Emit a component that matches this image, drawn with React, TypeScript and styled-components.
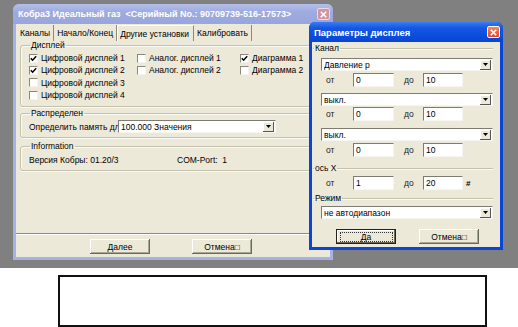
import React from 'react';
import styled, { createGlobalStyle, css } from 'styled-components';

const Global = createGlobalStyle`
  html, body { margin: 0; padding: 0; background: #fff; }
  body { font-family: "Liberation Sans", Arial, sans-serif; font-size: 8.5px; color: #000; }
  * { box-sizing: border-box; }
`;

const Page = styled.div`
  width: 518px;
  height: 327px;
  display: flex;
  flex-direction: column;
  overflow: hidden;
  background: #fff;
`;

const Desktop = styled.div`
  position: relative;
  flex: none;
  height: 268px;
  background: #808080;
`;

const Lower = styled.div`
  flex: 1;
  padding: 7px 0 0 58px;
`;

const NoteBox = styled.div`
  width: 429px;
  height: 52px;
  border: 2px solid #111;
`;

const Window = styled.div<{ $active?: boolean; $x: number; $y: number; $w: number; $h: number }>`
  position: absolute;
  left: ${p => p.$x}px;
  top: ${p => p.$y}px;
  width: ${p => p.$w}px;
  height: ${p => p.$h}px;
  display: flex;
  flex-direction: column;
  padding: 0 3px 3px;
  border-radius: 6px 6px 0 0;
  background: ${p => (p.$active ? '#0b45d8' : '#a6b2e3')};
`;

const TitleBar = styled.div<{ $active?: boolean; $h: number }>`
  flex: none;
  height: ${p => p.$h}px;
  margin: 0 -3px;
  padding: 0 3px 0 5px;
  display: flex;
  align-items: center;
  border-radius: 6px 6px 0 0;
  color: #fff;
  font-weight: bold;
  font-size: ${p => (p.$active ? 9.5 : 9)}px;
  white-space: nowrap;
  background: ${p =>
    p.$active
      ? 'linear-gradient(#3b7cf2 0%, #1656e2 30%, #0a4ddc 70%, #0b45d0 100%)'
      : 'linear-gradient(#b4bfe9 0%, #9eabdf 40%, #98a6dc 100%)'};
`;

const TitleText = styled.span`
  flex: 1;
  overflow: hidden;
`;

const CloseBtn = styled.div<{ $active?: boolean }>`
  flex: none;
  width: 13px;
  height: 12px;
  border-radius: 2px;
  display: flex;
  align-items: center;
  justify-content: center;
  border: 1px solid ${p => (p.$active ? '#fff' : '#e8d8e8')};
  background: ${p => (p.$active ? 'linear-gradient(#f08a64, #e0452a)' : '#d493a2')};
`;

const Body = styled.div`
  flex: 1;
  display: flex;
  flex-direction: column;
  background: #ece9d8;
  min-height: 0;
`;

/* ---- Main window parts ---- */
const TabStrip = styled.div`
  flex: none;
  display: flex;
  height: 16px;
  padding-left: 1px;
  margin-top: 1px;
`;

const Tab = styled.div<{ $active?: boolean }>`
  display: flex;
  align-items: center;
  padding: 0 3px;
  border-right: 1px solid #8c8a80;
  ${p =>
    p.$active &&
    css`
      border-left: 1px solid #fff;
      border-top: 1px solid #fff;
      padding: 0 4px 0 2px;
    `}
`;

const TabPanel = styled.div`
  flex: 1;
  display: flex;
  flex-direction: column;
  padding: 0 5px 0 4px;
`;

const Group = styled.fieldset<{ $top?: number }>`
  margin: ${p => p.$top ?? 0}px 0 0;
  padding: 0 0 0 8px;
  border: 1px solid #c3c0ae;
  border-radius: 3px;
  box-shadow: 1px 1px 0 #fbfbf6, inset 1px 1px 0 #fbfbf6;
`;

const Legend = styled.legend`
  padding: 0 1px;
  margin-left: 1px;
  line-height: 9px;
  color: #000;
`;

const CheckGrid = styled.div`
  display: grid;
  grid-template-columns: 108px 103px auto;
  grid-auto-flow: column;
  grid-template-rows: repeat(4, 12.3px);
  padding: 2px 0 5px;
`;

const CheckItem = styled.label`
  display: flex;
  align-items: center;
  gap: 3px;
  white-space: nowrap;
`;

const CheckBox = styled.span`
  flex: none;
  width: 9px;
  height: 9px;
  background: #fff;
  border-top: 1px solid #8a887c;
  border-left: 1px solid #8a887c;
  border-right: 1px solid #f4f3ee;
  border-bottom: 1px solid #f4f3ee;
  display: flex;
  align-items: center;
  justify-content: center;
`;

const FieldRow = styled.div<{ $pt?: number; $pb?: number }>`
  display: flex;
  align-items: center;
  padding: ${p => p.$pt ?? 2}px 0 ${p => p.$pb ?? 3}px;
  white-space: nowrap;
`;

const ClipLabel = styled.span<{ $w: number }>`
  flex: none;
  width: ${p => p.$w}px;
  overflow: hidden;
`;

const Select = styled.div<{ $w?: number }>`
  flex: none;
  display: flex;
  align-items: center;
  height: 13px;
  width: ${p => (p.$w ? `${p.$w}px` : 'auto')};
  background: #fff;
  border-top: 1px solid #7e7c72;
  border-left: 1px solid #7e7c72;
  border-right: 1px solid #f6f5f0;
  border-bottom: 1px solid #f6f5f0;
  padding: 0 1px 0 2px;
`;

const SelectText = styled.span`
  flex: 1;
  white-space: nowrap;
  overflow: hidden;
`;

const DropBtn = styled.span`
  flex: none;
  width: 11px;
  height: 10px;
  background: #ece9d8;
  box-shadow: inset -1px -1px 0 #555, inset 1px 1px 0 #fff;
  display: flex;
  align-items: center;
  justify-content: center;
`;

const Spacer = styled.div`
  flex: 1;
`;

const Separator = styled.div`
  flex: none;
  height: 2px;
  border-top: 1px solid #8c8a7e;
  border-bottom: 1px solid #fff;
`;

const ButtonRow = styled.div<{ $pl: number; $gap: number; $pt: number; $pb: number }>`
  flex: none;
  display: flex;
  padding: ${p => p.$pt}px 0 ${p => p.$pb}px ${p => p.$pl}px;
  gap: ${p => p.$gap}px;
`;

const Button = styled.div<{ $default?: boolean }>`
  width: 60px;
  height: 15px;
  display: flex;
  align-items: center;
  justify-content: center;
  background: #ece9d8;
  box-shadow: inset -1px -1px 0 #6b695f, inset 1px 1px 0 #fff, inset -2px -2px 0 #a9a796;
  ${p =>
    p.$default &&
    css`
      border: 1px solid #222;
      box-shadow: inset -1px -1px 0 #6b695f, inset 1px 1px 0 #fff;
    `}
`;

const FocusRing = styled.span`
  display: flex;
  align-items: center;
  justify-content: center;
  width: calc(100% - 5px);
  height: calc(100% - 3px);
  border: 1px dotted #333;
`;

/* ---- Dialog parts ---- */
const DialogBody = styled(Body)`
  padding: 0 7px 0 1px;
`;

const Section = styled.fieldset<{ $top: number }>`
  margin: ${p => p.$top}px 0 0;
  padding: 0;
  border: none;
  border-top: 1px solid #c3c0ae;
  box-shadow: inset 0 1px 0 #fbfbf6;
  min-width: 0;
`;

const SectionLegend = styled.legend`
  padding: 0 1px 0 1px;
  margin-left: 1px;
  line-height: 9px;
`;

const Indented = styled.div<{ $top: number }>`
  padding-left: 8px;
  margin-top: ${p => p.$top}px;
`;

const RangeRow = styled.div<{ $top: number }>`
  display: flex;
  align-items: center;
  height: 14px;
  margin-top: ${p => p.$top}px;
  padding-left: 13px;
`;

const RangeLabel = styled.span<{ $w: number; $ml?: number }>`
  flex: none;
  width: ${p => p.$w}px;
  margin-left: ${p => p.$ml ?? 0}px;
  color: #222;
`;

const Input = styled.div<{ $w: number }>`
  flex: none;
  width: ${p => p.$w}px;
  height: 14px;
  display: flex;
  align-items: center;
  padding-left: 2px;
  background: #fff;
  border-top: 1px solid #7e7c72;
  border-left: 1px solid #7e7c72;
  border-right: 1px solid #f6f5f0;
  border-bottom: 1px solid #f6f5f0;
`;

const Suffix = styled.span`
  margin-left: 3px;
  font-weight: bold;
  font-size: 8px;
`;

const CloseIcon = () => (
  <svg width="7" height="7" viewBox="0 0 7 7">
    <path d="M0.8 0.8 L6.2 6.2 M6.2 0.8 L0.8 6.2" stroke="#fff" strokeWidth="1.6" />
  </svg>
);

const CheckMark = () => (
  <svg width="7" height="7" viewBox="0 0 7 7">
    <path d="M0.8 3.2 L2.6 5.2 L6.2 1.2" stroke="#000" strokeWidth="1.5" fill="none" />
  </svg>
);

const Arrow = () => (
  <svg width="5" height="3" viewBox="0 0 5 3">
    <path d="M0 0 H5 L2.5 3 Z" fill="#000" />
  </svg>
);

const Check: React.FC<{ label: string; checked?: boolean }> = ({ label, checked }) => (
  <CheckItem>
    <CheckBox>{checked && <CheckMark />}</CheckBox>
    {label}
  </CheckItem>
);

const Combo: React.FC<{ text: string; w?: number }> = ({ text, w }) => (
  <Select $w={w}>
    <SelectText>{text}</SelectText>
    <DropBtn>
      <Arrow />
    </DropBtn>
  </Select>
);

const Range: React.FC<{ top: number; from: string; to: string; suffix?: string }> = ({ top, from, to, suffix }) => (
  <RangeRow $top={top}>
    <RangeLabel $w={27}>от</RangeLabel>
    <Input $w={41}>{from}</Input>
    <RangeLabel $w={19} $ml={10}>до</RangeLabel>
    <Input $w={40}>{to}</Input>
    {suffix && <Suffix>{suffix}</Suffix>}
  </RangeRow>
);

export default function App() {
  return (
    <Page>
      <Global />
      <Desktop>
        <Window $x={13} $y={4} $w={320} $h={256}>
          <TitleBar $h={20}>
            <TitleText>Кобра3 Идеальный газ&nbsp; &lt;Серийный No.: 90709739-516-17573&gt;</TitleText>
            <CloseBtn>
              <CloseIcon />
            </CloseBtn>
          </TitleBar>
          <Body>
            <TabStrip>
              <Tab>Каналы</Tab>
              <Tab>Начало/Конец</Tab>
              <Tab $active>Другие установки</Tab>
              <Tab>Калибровать</Tab>
            </TabStrip>
            <TabPanel>
              <Group>
                <Legend>Дисплей</Legend>
                <CheckGrid>
                  <Check label="Цифровой дисплей 1" checked />
                  <Check label="Цифровой дисплей 2" checked />
                  <Check label="Цифровой дисплей 3" />
                  <Check label="Цифровой дисплей 4" />
                  <Check label="Аналог. дисплей 1" />
                  <Check label="Аналог. дисплей 2" />
                  <span />
                  <span />
                  <Check label="Диаграмма 1" checked />
                  <Check label="Диаграмма 2" />
                </CheckGrid>
              </Group>
              <Group $top={2}>
                <Legend>Распределен</Legend>
                <FieldRow $pt={2} $pb={4}>
                  <ClipLabel $w={89}>Определить память для</ClipLabel>
                  <Combo text="100.000 Значения" w={158} />
                </FieldRow>
              </Group>
              <Group $top={4}>
                <Legend>Information</Legend>
                <FieldRow $pt={4} $pb={5}>
                  <ClipLabel $w={148}>Версия Кобры: 01.20/3</ClipLabel>
                  <span>COM-Port:&nbsp; 1</span>
                </FieldRow>
              </Group>
              <Spacer />
            </TabPanel>
            <Separator />
            <ButtonRow $pl={74} $gap={42} $pt={4} $pb={3}>
              <Button>Далее</Button>
              <Button>Отмена□</Button>
            </ButtonRow>
          </Body>
        </Window>

        <Window $active $x={309} $y={22} $w={194} $h={228}>
          <TitleBar $active $h={20}>
            <TitleText>Параметры дисплея</TitleText>
            <CloseBtn $active>
              <CloseIcon />
            </CloseBtn>
          </TitleBar>
          <DialogBody>
            <Section $top={2}>
              <SectionLegend>Канал</SectionLegend>
              <Indented $top={5}>
                <Combo text="Давление p" />
              </Indented>
              <Range top={2} from="0" to="10" />
              <Indented $top={6}>
                <Combo text="выкл." />
              </Indented>
              <Range top={1} from="0" to="10" />
              <Indented $top={7}>
                <Combo text="выкл." />
              </Indented>
              <Range top={2} from="0" to="10" />
            </Section>
            <Section $top={7}>
              <SectionLegend>ось X</SectionLegend>
              <Range top={3} from="1" to="20" suffix="#" />
            </Section>
            <Section $top={4}>
              <SectionLegend>Режим</SectionLegend>
              <Indented $top={3}>
                <Combo text="не автодиапазон" />
              </Indented>
            </Section>
            <ButtonRow $pl={23} $gap={23} $pt={10} $pb={0}>
              <Button $default>
                <FocusRing>Да</FocusRing>
              </Button>
              <Button>Отмена□</Button>
            </ButtonRow>
          </DialogBody>
        </Window>
      </Desktop>
      <Lower>
        <NoteBox />
      </Lower>
    </Page>
  );
}
